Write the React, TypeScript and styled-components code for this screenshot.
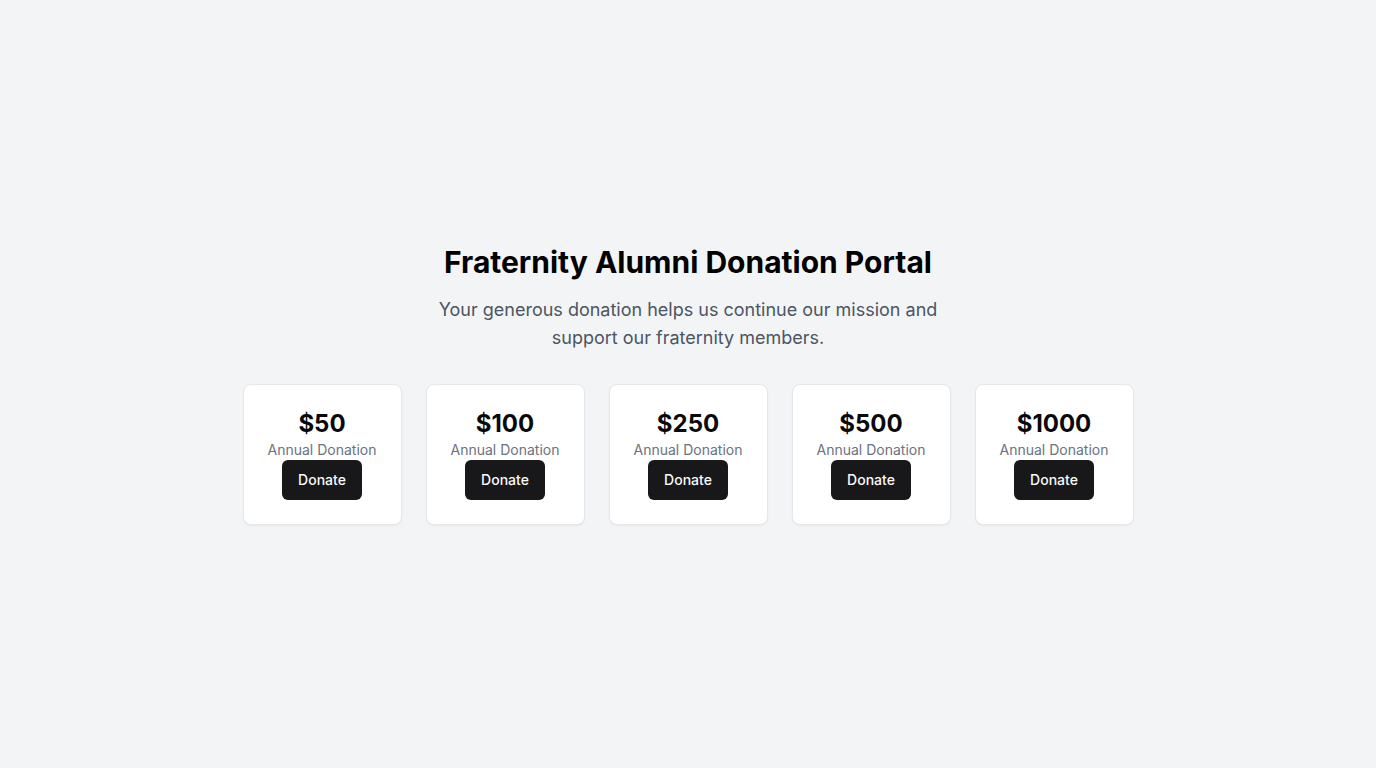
import styled, { createGlobalStyle } from "styled-components";

const GlobalStyle = createGlobalStyle`
    * { box-sizing: border-box; }
    body {
        margin: 0;
        background-color: #f3f4f6;
        font-family: Inter, "Noto Sans", sans-serif;
    }
`;

const Page = styled.main`
    min-height: 100vh;
    display: flex;
    flex-direction: column;
    align-items: center;
    justify-content: center;
`;

const Title = styled.h1`
    margin: 0 0 16px;
    font-size: 30px;
    line-height: 36px;
    font-weight: 700;
    color: #000;
    text-align: center;
`;

const Subtitle = styled.p`
    margin: 0 0 32px;
    max-width: 512px;
    font-size: 18px;
    line-height: 28px;
    color: #4b5563;
    text-align: center;
`;

const Tiers = styled.div`
    display: grid;
    grid-template-columns: repeat(5, 159px);
    gap: 24px;
`;

const Card = styled.div`
    display: flex;
    flex-direction: column;
    align-items: center;
    padding: 23px 0 24px;
    background-color: #fff;
    border: 1px solid #e5e7eb;
    border-radius: 8px;
    box-shadow: 0 1px 2px rgba(0, 0, 0, 0.05);
`;

const Amount = styled.h2`
    margin: 0;
    font-size: 24px;
    line-height: 32px;
    font-weight: 700;
    color: #09090b;
`;

const Label = styled.p`
    margin: 0;
    font-size: 14px;
    line-height: 20px;
    color: #6b7280;
`;

const DonateButton = styled.button`
    height: 40px;
    width: 80px;
    border: none;
    border-radius: 6px;
    background-color: #18181b;
    color: #fafafa;
    font-family: inherit;
    font-size: 14px;
    font-weight: 500;
    cursor: pointer;
`;

const amounts = [50, 100, 250, 500, 1000];

export default function App() {
    return (
        <Page>
            <GlobalStyle />
            <Title>Fraternity Alumni Donation Portal</Title>
            <Subtitle>
                Your generous donation helps us continue our mission and support our fraternity members.
            </Subtitle>
            <Tiers>
                {amounts.map(amount => (
                    <Card key={amount}>
                        <Amount>${amount}</Amount>
                        <Label>Annual Donation</Label>
                        <DonateButton>Donate</DonateButton>
                    </Card>
                ))}
            </Tiers>
        </Page>
    );
}
